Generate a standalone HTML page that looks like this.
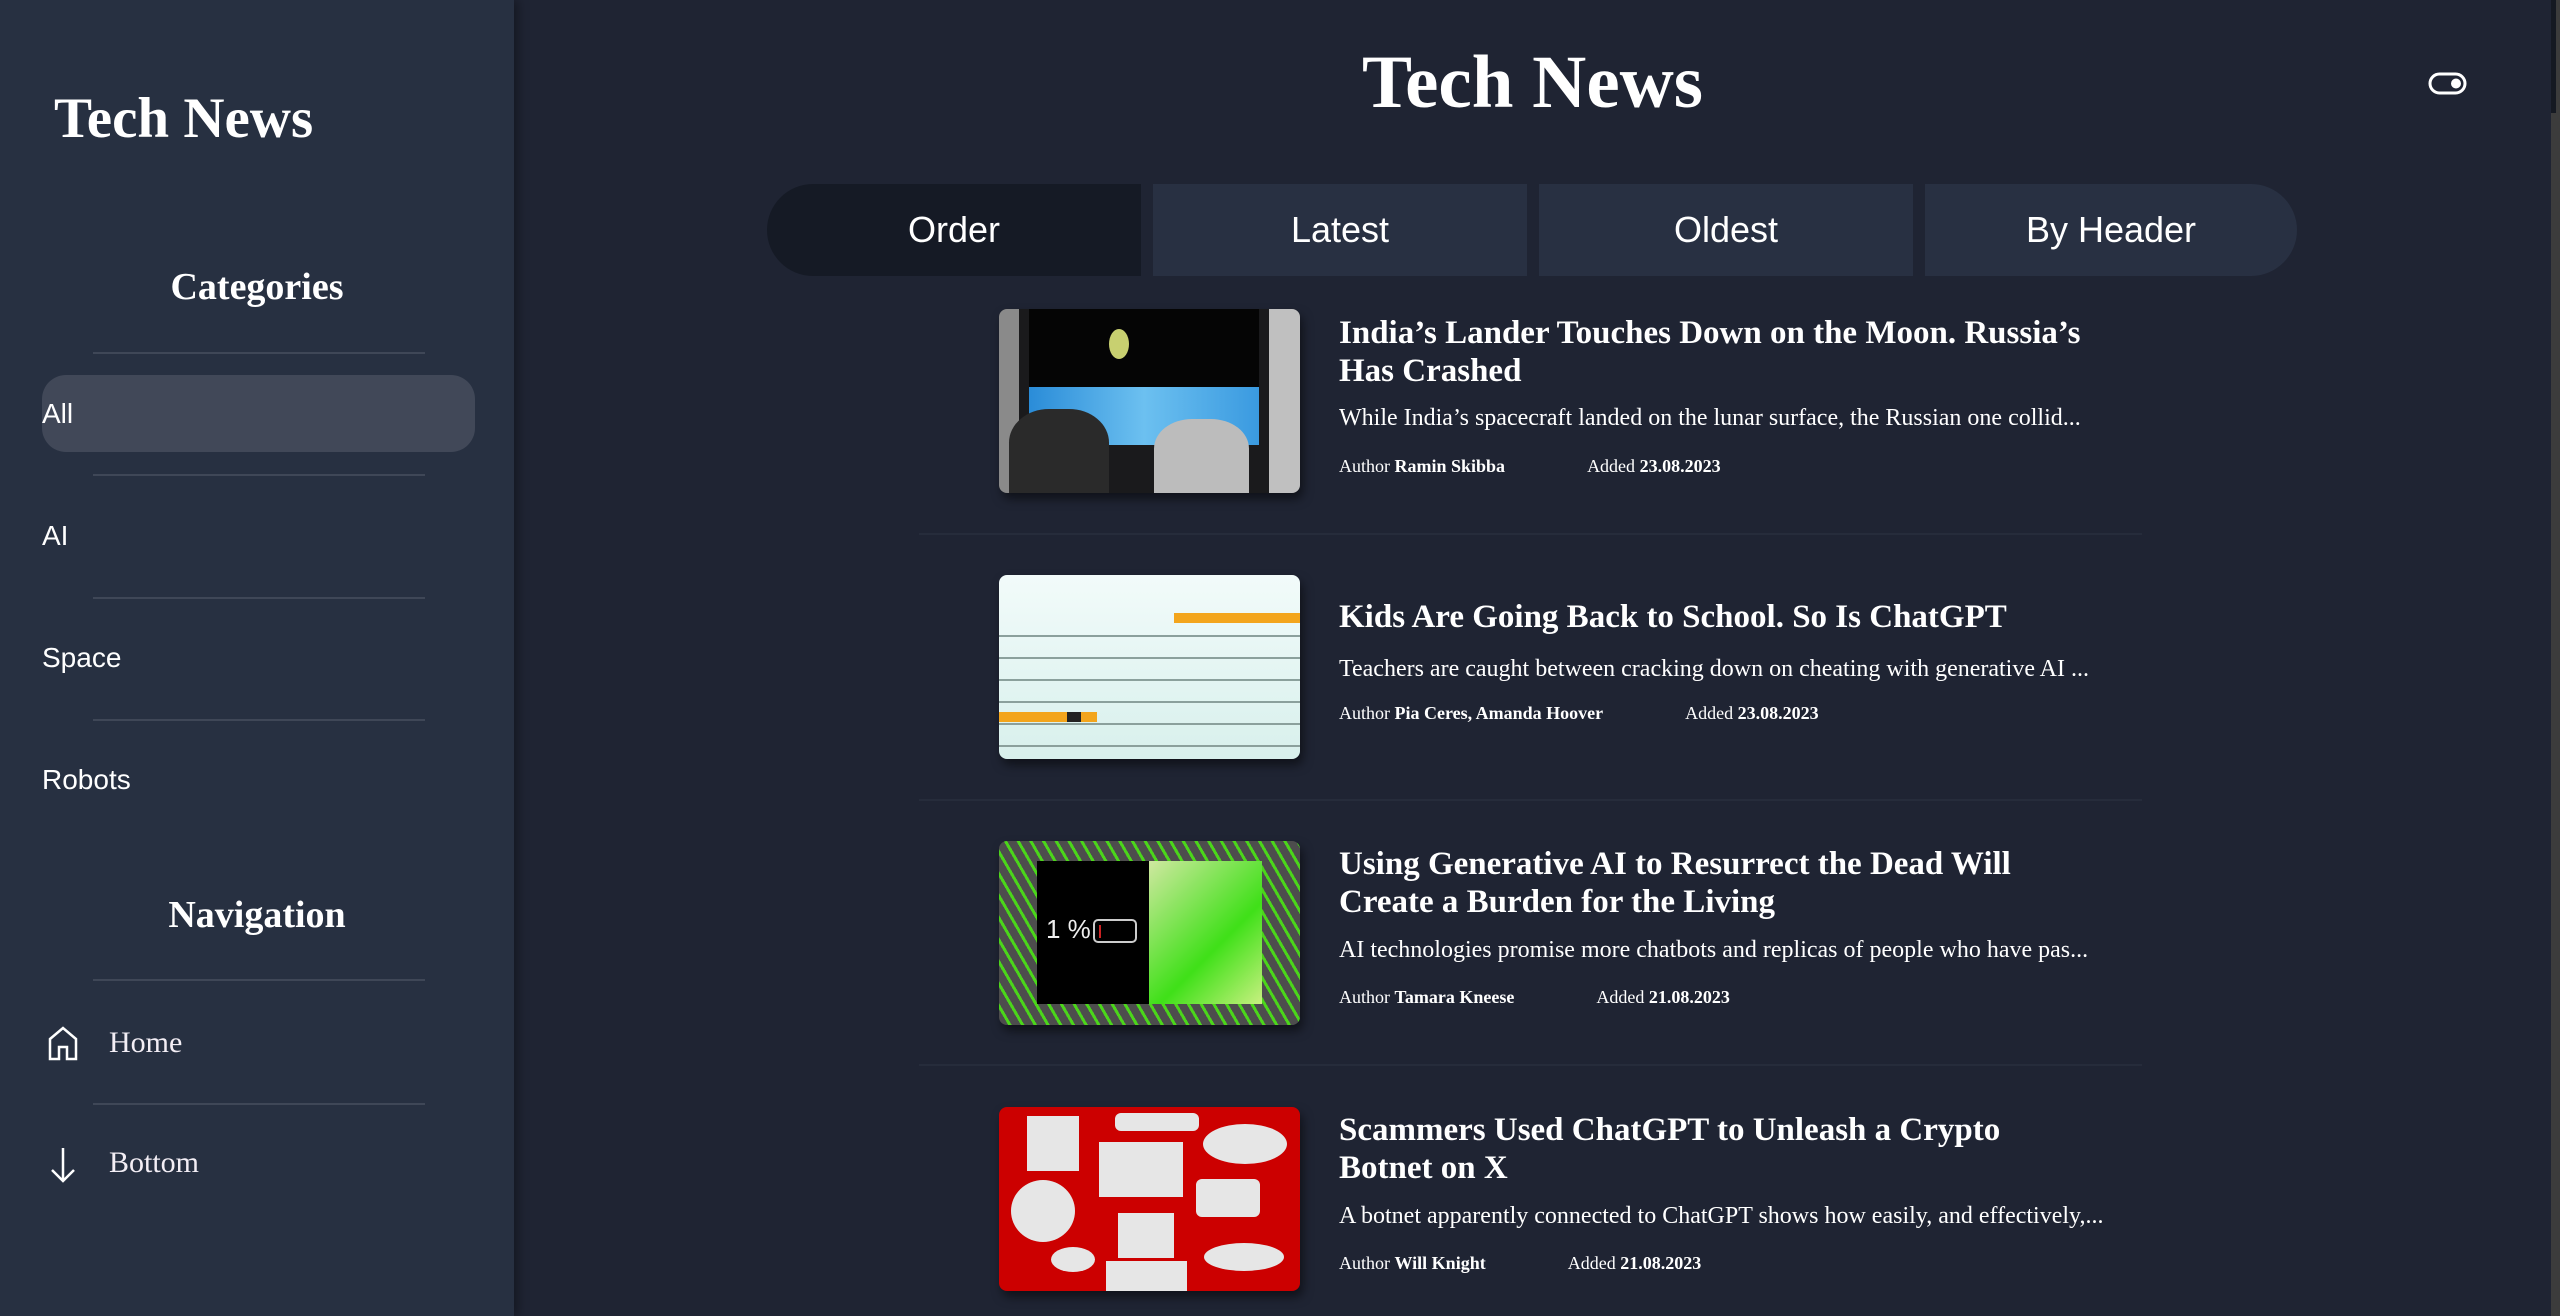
<!DOCTYPE html>
<html><head><meta charset="utf-8">
<style>
*{margin:0;padding:0;box-sizing:border-box}
body{width:2560px;height:1316px;overflow:hidden;background:#1f2433;font-family:"Liberation Sans",sans-serif;color:#fff;position:relative}
.side{position:absolute;left:0;top:0;width:514px;height:1316px;background:#273041;box-shadow:4px 0 10px rgba(0,0,0,.35)}
.serif{font-family:"Liberation Serif","DejaVu Serif",serif;font-weight:bold}
.abs{position:absolute}
.div{position:absolute;left:93px;width:332px;height:2px;background:#3f4757}
.cat{position:absolute;left:42px;font-size:28px;line-height:1}
.nav{position:absolute;left:109px;font-size:30px;font-family:"Liberation Serif",serif;color:#f3eef5}
.tab{position:absolute;top:184px;height:92px;width:374px;background:#283042;font-size:36px;display:flex;align-items:center;justify-content:center}
.img{position:absolute;left:999px;width:301px;height:184px;border-radius:8px;overflow:hidden;box-shadow:3px 6px 10px rgba(0,0,0,.5)}
.t{position:absolute;left:1339px;font-size:33px;line-height:38px;width:762px;font-family:"Liberation Serif",serif;font-weight:bold}
.d{position:absolute;left:1339px;font-size:24px;font-family:"Liberation Serif",serif;white-space:nowrap}
.m{position:absolute;left:1339px;font-size:18px;font-family:"Liberation Serif",serif;white-space:nowrap}
.m b{font-weight:bold}
.m span{margin-left:82px}
.sep{position:absolute;left:919px;width:1223px;height:2px;background:#262c3b}
</style></head><body>
<div class="side">
<div class="abs serif" style="left:54px;top:86px;font-size:57px">Tech News</div>
<div class="abs serif" style="left:0;width:514px;text-align:center;top:265px;font-size:38px">Categories</div>
<div class="div" style="top:352px"></div>
<div class="abs" style="left:42px;top:375px;width:433px;height:77px;background:#414858;border-radius:24px"></div>
<div class="cat" style="top:400px">All</div>
<div class="div" style="top:474px"></div>
<div class="cat" style="top:522px">AI</div>
<div class="div" style="top:597px"></div>
<div class="cat" style="top:644px">Space</div>
<div class="div" style="top:719px"></div>
<div class="cat" style="top:766px">Robots</div>
<div class="abs serif" style="left:0;width:514px;text-align:center;top:893px;font-size:38px">Navigation</div>
<div class="div" style="top:979px"></div>
<svg class="abs" style="left:47px;top:1025px" width="32" height="36" viewBox="0 0 32 36"><path d="M3 34V14L16 3L29 14V34H20V22H12V34Z" fill="none" stroke="#fff" stroke-width="2.5"/></svg>
<div class="nav" style="top:1026px">Home</div>
<div class="div" style="top:1103px"></div>
<svg class="abs" style="left:49px;top:1146px" width="28" height="38" viewBox="0 0 28 38"><path d="M14 2V35M3 24L14 35L25 24" fill="none" stroke="#fff" stroke-width="2.5"/></svg>
<div class="nav" style="top:1146px">Bottom</div>
</div>

<div class="abs serif" style="left:514px;width:2037px;text-align:center;top:40px;font-size:75px">Tech News</div>
<svg class="abs" style="left:2428px;top:72px" width="40" height="24" viewBox="0 0 40 24"><rect x="2" y="2" width="35" height="19" rx="9.5" fill="none" stroke="#fff" stroke-width="3"/><circle cx="28" cy="11.5" r="5" fill="#fff"/></svg>
<div class="abs" style="left:2551px;top:0;width:9px;height:1316px;background:#3c3c3c"></div>
<div class="abs" style="left:2551px;top:0;width:5px;height:113px;background:#151922"></div>

<div class="tab" style="left:767px;background:#151a25;border-radius:46px 0 0 46px">Order</div>
<div class="tab" style="left:1153px">Latest</div>
<div class="tab" style="left:1539px">Oldest</div>
<div class="tab" style="left:1925px;width:372px;border-radius:0 46px 46px 0">By Header</div>

<div class="img" style="top:309px;background:#1a1a1c">
<div class="abs" style="left:30px;top:0;width:230px;height:90px;background:#050505"></div>
<div class="abs" style="left:30px;top:78px;width:230px;height:58px;background:linear-gradient(90deg,#2a8cd8,#6cc0f0,#3a9ae0)"></div>
<div class="abs" style="left:110px;top:20px;width:20px;height:30px;background:#c8d070;border-radius:50%"></div>
<div class="abs" style="left:0;top:0;width:20px;height:184px;background:#8a8a8a"></div>
<div class="abs" style="left:270px;top:0;width:31px;height:184px;background:#c0c0c0"></div>
<div class="abs" style="left:10px;top:100px;width:100px;height:84px;background:#2a2a2a;border-radius:40% 40% 0 0"></div>
<div class="abs" style="left:155px;top:110px;width:95px;height:74px;background:#bcbcbc;border-radius:40% 40% 0 0"></div>
</div>
<div class="t" style="top:314px">India’s Lander Touches Down on the Moon. Russia’s Has Crashed</div>
<div class="d" style="top:405px">While India’s spacecraft landed on the lunar surface, the Russian one collid...</div>
<div class="m" style="top:456px">Author <b>Ramin Skibba</b><span>Added <b>23.08.2023</b></span></div>
<div class="sep" style="top:533px"></div>

<div class="img" style="top:575px;background:linear-gradient(180deg,#f2fbfa,#d8f0ec)">
<div class="abs" style="left:0;top:40px;width:301px;height:140px;background:repeating-linear-gradient(180deg,transparent 0 20px,#8ba09c 20px 22px)"></div>
<div class="abs" style="left:175px;top:38px;width:126px;height:10px;background:#f3a51c"></div>
<div class="abs" style="left:0;top:137px;width:98px;height:10px;background:#f3a51c"></div>
<div class="abs" style="left:68px;top:137px;width:14px;height:10px;background:#222"></div>
</div>
<div class="t" style="top:598px">Kids Are Going Back to School. So Is ChatGPT</div>
<div class="d" style="top:656px">Teachers are caught between cracking down on cheating with generative AI ...</div>
<div class="m" style="top:703px">Author <b>Pia Ceres, Amanda Hoover</b><span>Added <b>23.08.2023</b></span></div>
<div class="sep" style="top:799px"></div>

<div class="img" style="top:841px;background:repeating-linear-gradient(60deg,#4d4d4d 0 8px,#4bd61a 8px 11px)">
<div class="abs" style="left:38px;top:20px;width:112px;height:143px;background:#000"></div>
<div class="abs" style="left:150px;top:20px;width:113px;height:143px;background:linear-gradient(135deg,#cfe8a0,#3fe018 60%,#c8f080)"></div>
<div class="abs" style="left:47px;top:73px;font-size:26px;color:#eee">1 %</div>
<div class="abs" style="left:94px;top:78px;width:44px;height:24px;border:2px solid #ccc;border-radius:5px"><div style="margin:4px;width:2px;height:13px;background:#c22"></div></div>
</div>
<div class="t" style="top:845px">Using Generative AI to Resurrect the Dead Will Create a Burden for the Living</div>
<div class="d" style="top:937px">AI technologies promise more chatbots and replicas of people who have pas...</div>
<div class="m" style="top:987px">Author <b>Tamara Kneese</b><span>Added <b>21.08.2023</b></span></div>
<div class="sep" style="top:1064px"></div>

<div class="img" style="top:1107px;background:#cc0000">
<div class="abs" style="left:28px;top:9px;width:52px;height:55px;background:#e6e6e6"></div>
<div class="abs" style="left:116px;top:6px;width:84px;height:18px;background:#e6e6e6;border-radius:6px"></div>
<div class="abs" style="left:204px;top:17px;width:84px;height:40px;background:#e6e6e6;border-radius:50%"></div>
<div class="abs" style="left:100px;top:35px;width:84px;height:55px;background:#e6e6e6"></div>
<div class="abs" style="left:12px;top:73px;width:64px;height:62px;background:#e6e6e6;border-radius:50%"></div>
<div class="abs" style="left:197px;top:72px;width:64px;height:38px;background:#e6e6e6;border-radius:6px"></div>
<div class="abs" style="left:119px;top:106px;width:56px;height:45px;background:#e6e6e6"></div>
<div class="abs" style="left:107px;top:154px;width:81px;height:30px;background:#e6e6e6"></div>
<div class="abs" style="left:52px;top:140px;width:44px;height:25px;background:#e6e6e6;border-radius:50%"></div>
<div class="abs" style="left:205px;top:136px;width:80px;height:28px;background:#e6e6e6;border-radius:50%"></div>
</div>
<div class="t" style="top:1111px">Scammers Used ChatGPT to Unleash a Crypto Botnet on X</div>
<div class="d" style="top:1203px">A botnet apparently connected to ChatGPT shows how easily, and effectively,...</div>
<div class="m" style="top:1253px">Author <b>Will Knight</b><span>Added <b>21.08.2023</b></span></div>
</body></html>
